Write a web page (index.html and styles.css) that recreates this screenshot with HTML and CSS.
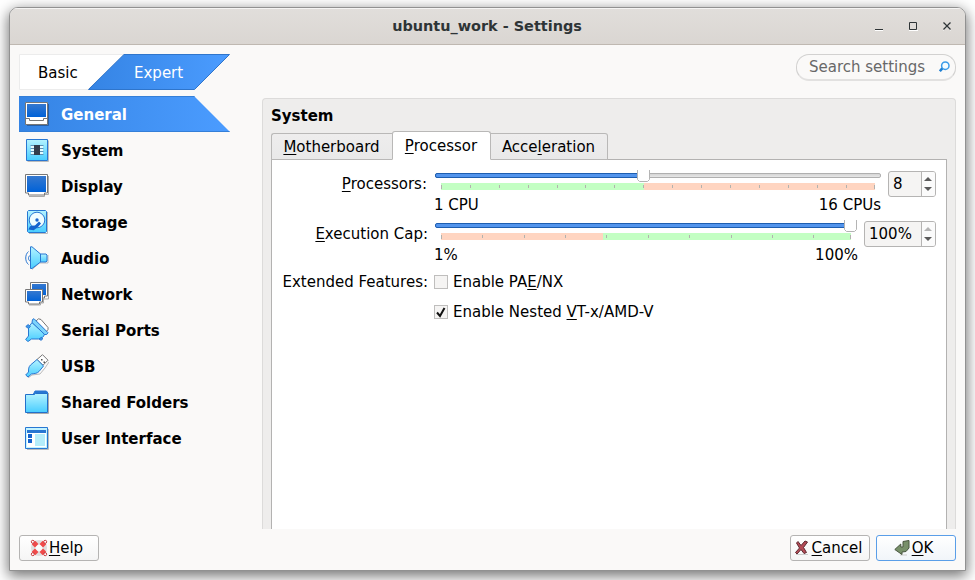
FILE: index.html
```
<!DOCTYPE html>
<html lang="en">
<head>
<meta charset="utf-8">
<title>ubuntu_work - Settings</title>
<link rel="stylesheet" href="styles.css">
</head>
<body>
<svg class="defs" width="0" height="0">
  <defs>
    <linearGradient id="screen" x1="0" y1="0" x2="0" y2="1"><stop offset="0" stop-color="#3578cf"/><stop offset="1" stop-color="#0062d8"/></linearGradient>
    <linearGradient id="cyan" x1="0" y1="0" x2="0" y2="1"><stop offset="0" stop-color="#b5f3ff"/><stop offset="1" stop-color="#48cdff"/></linearGradient>
    <linearGradient id="accent" x1="0" y1="0" x2="1" y2="0"><stop offset="0" stop-color="#3584e4"/><stop offset="1" stop-color="#4b9cff"/></linearGradient>
    <linearGradient id="groove" x1="0" y1="0" x2="0" y2="1"><stop offset="0" stop-color="#d2d2d2"/><stop offset="1" stop-color="#eaeaea"/></linearGradient>
  </defs>
</svg>
<div class="window">
  <header class="titlebar">
    <div class="title">ubuntu_work - Settings</div>
    <div class="controls">
      <svg width="10" height="10"><path d="M1 9.500h8" stroke="#fff"/><path d="M1 8.500h8" stroke="#2e3436"/></svg>
      <svg width="10" height="10"><path d="M1 9.500h9" stroke="#fff"/><path d="M1.500 1.500h7v7h-7z" fill="none" stroke="#2e3436"/></svg>
      <svg width="10" height="10"><path d="M1.500 2.500l7 7M8.500 2.500l-7 7" stroke="#fff"/><path d="M1.500 1.500l7 7M8.500 1.500l-7 7" stroke="#2e3436" stroke-width="1.400"/></svg>
    </div>
  </header>
  <main class="main">
    <nav class="side">
      <div class="modes"><span class="basic">Basic</span><span class="expert">Expert</span>
        <svg class="modes-bg" width="211" height="36"><path d="M.5.5h104L69 35.500H.5z" fill="#fff" stroke="#ececec"/><path d="M105 .5h105.500l-35 35H69.500z" fill="url(#accent)" stroke="#2f75cb"/></svg>
      </div>
      <ul class="cats">
        <li class="on"><svg class="ico" viewBox="0 0 24 24"><path d="M2 23.500h21.500V2" fill="none" stroke="#285fa5"/><path d="M.5.5h22v22H.5z" fill="#fff" stroke="#767676"/><path d="M2 2h19v13H2z" fill="url(#screen)"/><path d="M1 16.500h3.500v2h14v-2H22" fill="none" stroke="#767676"/></svg><span>General</span></li>
        <li><svg class="ico" viewBox="0 0 24 24"><path d="M2.500 23.500h21v-21" fill="none" stroke="#bbb"/><path d="M1.500 1.500h21v21h-21z" fill="url(#cyan)" stroke="#2877d2"/><path d="M6 8h12v8H6z" fill="#e5fbff"/><path d="M5.500 7.500h13M5.500 10.500h13M5.500 13.500h13M5.500 16.500h13" stroke="#5c8fb4"/><path d="M9 7h6v10H9z" fill="#333d4c"/></svg><span>System</span></li>
        <li><svg class="ico" viewBox="0 0 24 24"><path d="M4 22.500h15.500v-2h4V2" fill="none" stroke="#aaa"/><path d="M.5.500h22v18.500h-3v2h-16v-2h-3z" fill="#fff" stroke="#777"/><path d="M2 2h19v16H2z" fill="url(#screen)"/></svg><span>Display</span></li>
        <li><svg class="ico" viewBox="0 0 24 24"><path d="M4 23.500h18.500V2" fill="none" stroke="#bbb"/><path d="M3.500.500h17l1 1v20l-1 1h-17l-1-1v-20z" fill="url(#cyan)" stroke="#2877d2"/><circle cx="12" cy="10" r="7.800" fill="#effcff" stroke="#2877d2"/><circle cx="12" cy="10" r="1.700" fill="#1c65cc"/><path d="M4.500 19l1-2 5-1 3.500-3.500 1 1-2.500 3-4 3z" fill="#1463ce" stroke="#1463ce" stroke-width="1.500"/></svg><span>Storage</span></li>
        <li><svg class="ico" viewBox="0 0 24 24"><path d="M7 23.500l7.500-6.500h8.500V9" fill="none" stroke="#bbb"/><path d="M15 8h6l1 1v6l-1 1h-6z" fill="url(#cyan)" stroke="#2877d2"/><path d="M5.500.800H7L15.500 8v8L7 22.500H5.500z" fill="url(#cyan)" stroke="#2877d2"/><path d="M3.500 5.500C-.2 8.500-.2 15.500 3.500 18.500M5 9.500c-2 1-2 4.500 0 5.500" fill="none" stroke="#2877d2"/></svg><span>Audio</span></li>
        <li><svg class="ico" viewBox="0 0 24 24"><path d="M4 23h11.500v-2h3v-4h5V1" fill="none" stroke="#aaa"/><path d="M5.500.500h17v13.500h-3v2h-14z" fill="#fff" stroke="#777"/><path d="M7 2h14v11H7z" fill="url(#screen)"/><path d="M.5 7.500h17V20h-3v2h-11v-2h-3z" fill="#fff" stroke="#777"/><path d="M2 9h14v10H2z" fill="url(#screen)"/></svg><span>Network</span></li>
        <li><svg class="ico" viewBox="0 0 24 24"><path d="M11 3l2.500-2.200 2.500.7 7 8v2l-2 2.500z" fill="#fff" stroke="#777"/><path d="M7 4.500L19.500 16c-.5 3-3 4.500-6 5H6.500L3 23.500.600 21.500 3.500 18v-8.500z" fill="url(#cyan)" stroke="#2877d2"/><path d="M7.500 1.500L9 .700l14 14-1.300 1.800h-2L7 4.500z" fill="#7cd3fb" stroke="#2877d2"/><path d="M.8 8.500l2.500-2 2 2-1.800 2zM14 21l2.500-1.700 1.200 1.700-1.700 1.300z" fill="#3f9aeb" stroke="#2877d2"/></svg><span>Serial Ports</span></li>
        <li><svg class="ico" viewBox="0 0 24 24"><path d="M3 24l4-3 8-1 5-6 4-6" fill="none" stroke="#bbb"/><path d="M12 5.500L17.500.700l5.500 5.500-5 5z" fill="#fff" stroke="#777"/><path d="M16 5h1.500v1.500H16zM18.500 7.500H20V9h-1.500z" fill="#555"/><path d="M12 5.500l6.500 6.500-4.500 5.500c-2 2-4 2-7.500 2.500l-3.500 3-2.300-2L3.500 18c0-3 0-5 2-7z" fill="url(#cyan)" stroke="#2877d2"/></svg><span>USB</span></li>
        <li><svg class="ico" viewBox="0 0 24 24"><path d="M2 23.500h21.500V3" fill="none" stroke="#aaa"/><path d="M8.500 4l1.500-3h11l1.500 1v3z" fill="#2877d2" stroke="#2877d2"/><path d="M.5 4.500h9l1-1h12v19H.5z" fill="url(#cyan)" stroke="#2170cb"/></svg><span>Shared Folders</span></li>
        <li><svg class="ico" viewBox="0 0 24 24"><path d="M2 23.500h21.500V3" fill="none" stroke="#bbb"/><path d="M.5 1.500h22v21H.5z" fill="#c2f3ff" stroke="#2877d2"/><path d="M2 4h19v17H2z" fill="#fff"/><path d="M2 4h19v3H2z" fill="#2877d2"/><path d="M3 8h4v4H3zM3 13h4v4H3z" fill="#1463ce"/><path d="M10 8h10v12H10z" fill="#b5edfa"/></svg><span>User Interface</span></li>
      </ul>
    </nav>
    <section class="content">
      <div class="search"><span>Search settings</span><svg width="11" height="12" viewBox="0 0 11 12"><circle cx="6.300" cy="4.700" r="3.700" fill="#f4fcff" stroke="#3a9be8" stroke-width="1.500"/><path d="M.8 10.200l2.500-2.800" stroke="#1d7fd3" stroke-width="2.600"/></svg></div>
      <div class="panel">
        <h1>System</h1>
        <div class="tabs"><span class="tab mb"><u>M</u>otherboard</span><span class="tab active"><u>P</u>rocessor</span><span class="tab ac">Acce<u>l</u>eration</span></div>
        <div class="pane">
          <div class="row">
            <label class="first"><u>P</u>rocessors:</label>
            <div class="slider wide">
              <svg width="447" height="23"><path d="M6 14h203v7H6z" fill="#c3ffc3"/><path d="M209 14h231v7H209z" fill="#ffd5c1"/><path d="M6.500 16v4M35.500 16v3M64.500 16v3M93.500 16v3M122.500 16v3M150.500 16v3M179.500 16v3M208.500 16v3M237.500 16v3M266.500 16v3M295.500 16v3M324.500 16v3M353.500 16v3M382.500 16v3M411.500 16v3M439.500 16v4" stroke="#b2b2ae"/><rect x=".5" y="4.500" width="445" height="4" rx="1.500" fill="url(#groove)" stroke="#b0b0b0"/><rect x=".5" y="4.500" width="208" height="4" rx="1.500" fill="#5294ec" stroke="#1e5eb0"/><path d="M202.500 1v9.500l2 2h8l2-2V1" fill="#fff" stroke="#b4b4b4"/></svg>
              <div class="range"><span>1 CPU</span><span>16 CPUs</span></div>
            </div>
            <div class="spin small"><span>8</span><i><b class="up"></b><b class="down"></b></i></div>
          </div>
          <div class="row">
            <label><u>E</u>xecution Cap:</label>
            <div class="slider">
              <svg width="423" height="23"><path d="M6 14h162v7H6z" fill="#ffd5c1"/><path d="M168 14h248v7H168z" fill="#c3ffc3"/><path d="M6.500 16v4M47.500 16v3M89.500 16v3M130.500 16v3M171.500 16v3M213.500 16v3M254.500 16v3M296.500 16v3M337.500 16v3M378.500 16v3M415.500 16v4" stroke="#b2b2ae"/><rect x=".5" y="4.500" width="420" height="4" rx="1.500" fill="#5294ec" stroke="#1e5eb0"/><path d="M409.500 1v9.500l2 2h8l2-2V1" fill="#fff" stroke="#b4b4b4"/></svg>
              <div class="range percent"><span>1%</span><span>100%</span></div>
            </div>
            <div class="spin"><span>100%</span><i><b class="up off"></b><b class="down"></b></i></div>
          </div>
          <div class="row features">
            <label>Extended Features:</label>
            <div class="checks">
              <div><span class="box"></span><span>Enable PA<u>E</u>/NX</span></div>
              <div><span class="box"><svg width="12" height="12"><path d="M2 6.500l3 3.500L9.500 2" fill="none" stroke="#111" stroke-width="2"/></svg></span><span>Enable Nested <u>V</u>T-x/AMD-V</span></div>
            </div>
          </div>
        </div>
      </div>
    </section>
  </main>
  <footer class="footer">
    <div class="btn help"><svg width="18" height="18" viewBox="0 0 18 18"><circle cx="9" cy="9" r="5.800" fill="none" stroke="#dedede" stroke-width="4.500"/><path d="M3.500 3.500l3.200 3.200M14.500 3.500l-3.200 3.200M3.500 14.500l3.200-3.200M14.500 14.500l-3.200-3.200" stroke="#f04a4a" stroke-width="5"/><g fill="#fff" stroke="#c9383c"><circle cx="2.800" cy="2.800" r="1.500"/><circle cx="15.200" cy="2.800" r="1.500"/><circle cx="2.800" cy="15.200" r="1.500"/><circle cx="15.200" cy="15.200" r="1.500"/></g></svg><span><u>H</u>elp</span></div>
    <div class="btn cancel"><svg width="14" height="16" viewBox="0 0 14 16"><path d="M1 14.500h12" stroke="#ccc"/><path d="M3 1.500l3 4 4-4.500 2.500 1-4 5.500 3 5-2.500 1-3-4-4 4.500-1.500-1.500L4.500 8 1.500 3z" fill="#b44b56" stroke="#5d2a31"/></svg><span><u>C</u>ancel</span></div>
    <div class="btn ok"><svg width="16" height="16" viewBox="0 0 16 16"><path d="M6 15h7" stroke="#ccc"/><path d="M9 1.500l6-1V8l-3 3.500-4 .5v2.500L.8 9.500l6-5.500v3H9z" fill="#78906a" stroke="#48563f"/></svg><span><u>O</u>K</span></div>
  </footer>
</div>
</body>
</html>
```
FILE: styles.css
```
* { box-sizing: border-box; }
body {
  margin: 0;
  height: 580px;
  overflow: hidden;
  padding: 7px 9px 9px;
  background: #fff;
  font: 15px/18px "DejaVu Sans", sans-serif;
  color: #000;
}
.defs { position: absolute; }
svg { display: block; flex: none; }
u { text-underline-offset: 2px; text-decoration-thickness: 1px; text-decoration-skip-ink: none; }
.window {
  height: 564px;
  display: flex;
  flex-direction: column;
  border: 1px solid #919191;
  border-radius: 9px 9px 0 0;
  background: #faf9f8;
  box-shadow: 0 4px 14px 1px rgba(0, 0, 0, .55);
  overflow: hidden;
}
.titlebar {
  height: 37px;
  flex: none;
  display: grid;
  grid-template-columns: 1fr auto 1fr;
  align-items: center;
  background: linear-gradient(#e1dedb, #dad6d2);
  border-bottom: 1px solid #bfb8b1;
  box-shadow: inset 0 1px #f5f4f3;
}
.title { grid-column: 2; font-size: 14.45px; font-weight: bold; color: #2e3436; padding-right: 1px; }
.controls { display: flex; gap: 24px; justify-content: flex-end; padding-right: 13px; }
.main { height: 484px; flex: none; display: flex; padding: 9px 9px 0; }
.side { width: 211px; flex: none; }
.modes { position: relative; height: 36px; display: flex; align-items: center; padding-top: 2px; isolation: isolate; }
.modes-bg { position: absolute; left: 0; top: 0; z-index: -1; }
.basic { width: 96px; padding-left: 19px; }
.expert { padding-left: 19px; color: #fff; }
.cats { list-style: none; margin: 6px 0 0; padding: 0; font-weight: bold; }
.cats li { height: 36px; display: flex; align-items: center; gap: 12px; padding-left: 6px; }
.cats span { padding-top: 2px; }
.ico { width: 24px; height: 24px; }
.cats .on {
  color: #fff;
  background: linear-gradient(90deg, #3584e4, #4b9cff);
  box-shadow: inset 0 1px #347fd8, inset 0 -1px #347fd8;
  clip-path: polygon(0 0, 175px 0, 100% 100%, 0 100%);
}
.content { flex: 1; margin-left: 32px; display: flex; flex-direction: column; }
.search {
  width: 160px;
  height: 27px;
  align-self: flex-end;
  display: flex;
  align-items: center;
  justify-content: space-between;
  padding: 0 5px 1px 12px;
  border: 1px solid #d2d1d0;
  border-bottom: 2px solid #e2e1e0;
  border-radius: 13px;
  color: #686868;
}
.panel {
  flex: 1;
  margin-top: 17px;
  padding: 8px 8px 0;
  display: flex;
  flex-direction: column;
  background: #eeedec;
  border: 1px solid #dcdbda;
  border-bottom: 0;
  border-radius: 4px 4px 0 0;
}
h1 { margin: 0; font: bold 15px/18px "DejaVu Sans", sans-serif; padding-bottom: 6px; }
.tabs { display: flex; align-items: flex-end; height: 29px; margin-bottom: -1px; position: relative; }
.tab { height: 27px; padding: 4px 1px 4px 0; text-align: center; border: 1px solid #b9b8b7; background: linear-gradient(#eeeded, #e9e9e9); }
.mb { width: 121px; border-right: 0; padding-right: 1px; border-radius: 3px 0 0 0; }
.active { width: 99px; height: 29px; padding: 5px 1px 5px 0; background: #fff; border-bottom-color: #fff; border-radius: 3px 3px 0 0; }
.ac { width: 117px; border-left: 0; border-radius: 0 3px 0 0; }
.pane { flex: 1; padding: 9px 10px 0 0; background: #fff; border: 1px solid #b3b2b1; border-bottom: 0; }
.row { display: flex; height: 50px; }
.row label { width: 156px; padding-top: 6px; text-align: right; flex: none; margin-right: 7px; white-space: nowrap; }
.row .first { padding-right: 1px; }
.slider { width: 423px; }
.slider.wide { width: 447px; }
.range { display: flex; justify-content: space-between; padding-top: 4px; margin: 0 1px 0 -1px; line-height: 18px; }
.percent { margin-right: 0; }
.spin { width: 72px; height: 26px; margin: 2px 0 0 auto; display: flex; justify-content: space-between; border: 1px solid #b5b4b3; border-radius: 3px; background: #f5f4f3; overflow: hidden; }
.spin.small { width: 48px; }
.spin span { padding: 3px 0 0 4px; }
.spin i { width: 14px; border-left: 1px solid #b5b4b3; background: #fbfbfb; display: flex; flex-direction: column; align-items: center; padding: 5px 1px 0 0; gap: 6px; }
.spin b { border: 4px solid transparent; }
.spin .up { border-top: 0; border-bottom-color: #5a5a5a; }
.spin .off { border-bottom-color: #b4b4b4; }
.spin .down { border-bottom: 0; border-top-color: #5a5a5a; }
.features label { padding-top: 4px; }
.checks { padding-top: 4px; margin-left: -1px; display: flex; flex-direction: column; gap: 12px; white-space: nowrap; }
.checks div { display: flex; height: 18px; }
.box { width: 14px; height: 14px; margin: 2px 5px 0 0; border: 1px solid #bfbebd; background: #f5f4f3; flex: none; }
.footer { flex: 1; display: flex; gap: 6px; padding: 6px 9px 0; }
.btn { width: 80px; height: 26px; display: flex; align-items: center; justify-content: center; border: 1px solid #b5b4b3; border-radius: 3px; background: linear-gradient(#fff, #f5f5f5); }
.help { margin-right: auto; padding-right: 5px; }
.help svg { margin-right: 1px; }
.cancel { gap: 3px; padding-right: 3px; }
.ok { padding-right: 5px; gap: 2px; border-color: #5a9ee8; background: linear-gradient(#fff, #f1f5f9); }
```
